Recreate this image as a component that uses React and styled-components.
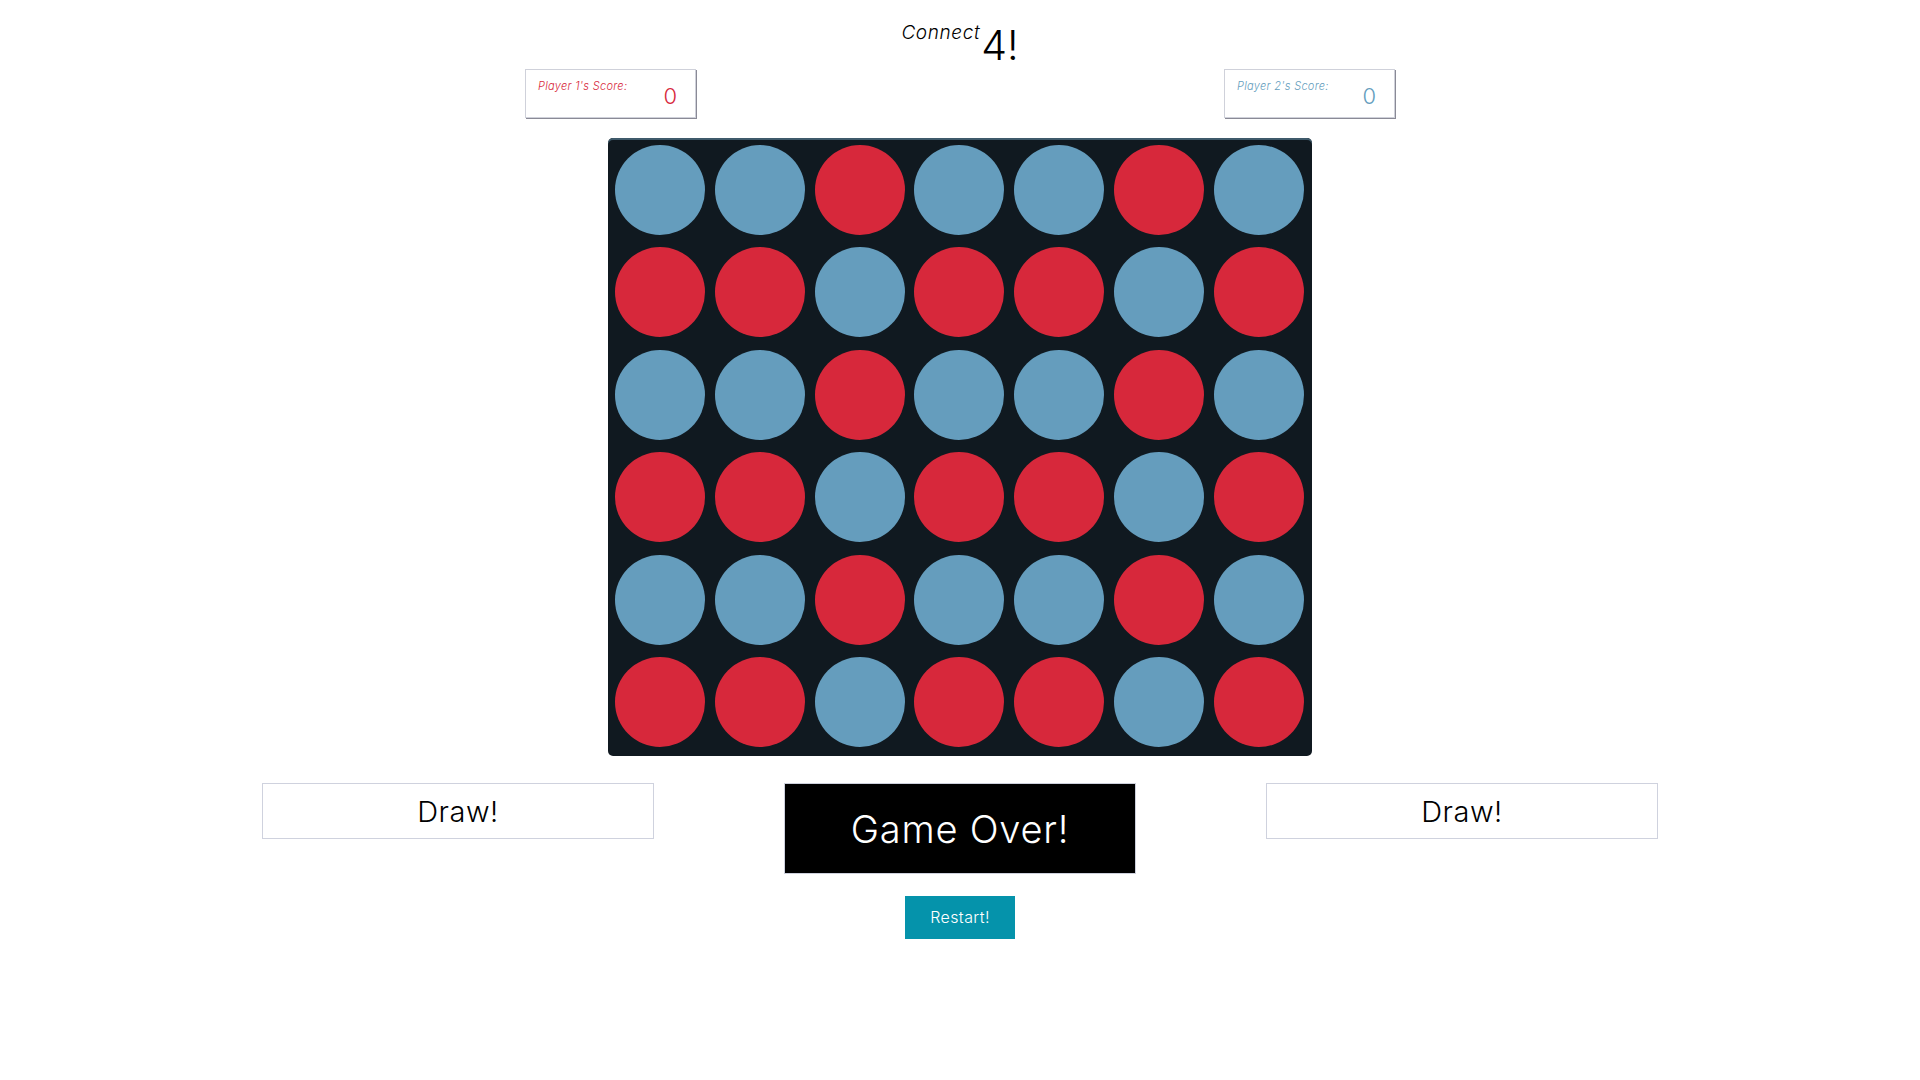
import React from "react";
import styled, { createGlobalStyle } from "styled-components";

const GlobalStyle = createGlobalStyle`
  body {
    margin: 0;
    background: #ffffff;
    font-family: "Inter", "Open Sans", sans-serif;
    color: #000;
  }
`;

const Page = styled.div`
  display: flex;
  flex-direction: column;
  align-items: center;
  min-height: 1080px;
`;

const Title = styled.h1`
  display: flex;
  align-items: flex-start;
  height: 69px;
  margin: 0;
  font-weight: 300;
`;

const Connect = styled.span`
  font-size: 19px;
  font-style: italic;
  font-weight: 300;
  letter-spacing: 0.6px;
  line-height: 1;
  margin-top: 23px;
  margin-right: 1px;
`;

const Four = styled.span`
  font-size: 41px;
  font-weight: 300;
  line-height: 1;
  margin-top: 25px;
`;

const ScoreRow = styled.div`
  display: flex;
  justify-content: space-between;
  width: 870px;
`;

const ScoreBox = styled.div`
  display: flex;
  justify-content: space-between;
  align-items: flex-start;
  width: 171px;
  height: 49px;
  box-sizing: border-box;
  padding: 9px 18px 0 12px;
  border: 1px solid #cfd1da;
  box-shadow: 1px 1px 0 #8a8a96;
  color: ${(p) => p.color};
`;

const ScoreLabel = styled.span`
  font-size: 11px;
  font-style: italic;
  font-weight: 300;
  letter-spacing: 0.3px;
  line-height: 1;
  margin-top: 2px;
`;

const ScoreValue = styled.span`
  font-size: 22px;
  font-weight: 300;
  line-height: 1;
  margin-top: 6px;
`;

const Board = styled.div`
  display: grid;
  grid-template-columns: repeat(7, 90px);
  grid-auto-rows: 90px;
  column-gap: 9.8px;
  row-gap: 12.4px;
  width: 704px;
  box-sizing: border-box;
  padding: 7px 5px 9px 7px;
  margin-top: 20px;
  background: #101920;
  border-radius: 5px;
  box-shadow: inset 0 2px 0 #3f5a6b;
`;

const Disc = styled.div`
  width: 90px;
  height: 90px;
  border-radius: 50%;
  background: ${(p) => (p.red ? "#d7283b" : "#659dbd")};
`;

const ButtonRow = styled.div`
  display: flex;
  align-items: flex-start;
  gap: 130px;
  margin-top: 27px;
`;

const DrawBox = styled.div`
  display: flex;
  align-items: center;
  justify-content: center;
  width: 392px;
  height: 56px;
  box-sizing: border-box;
  padding-top: 2px;
  border: 1px solid #cfd2de;
  font-size: 29px;
  font-weight: 300;
  letter-spacing: 0.5px;
`;

const GameOver = styled.div`
  display: flex;
  align-items: center;
  justify-content: center;
  width: 352px;
  height: 91px;
  box-sizing: border-box;
  padding-top: 2px;
  border: 1px solid #cdd0dc;
  background: #000;
  color: #fff;
  font-size: 38px;
  font-weight: 300;
  letter-spacing: 0.8px;
`;

const Restart = styled.button`
  width: 110px;
  height: 43px;
  margin-top: 22px;
  border: none;
  background: #0593ab;
  color: #fff;
  font-family: inherit;
  font-size: 16px;
  font-weight: 300;
  letter-spacing: 0.4px;
  cursor: pointer;
`;

const pattern = [
  "bbrbbrb",
  "rrbrrbr",
  "bbrbbrb",
  "rrbrrbr",
  "bbrbbrb",
  "rrbrrbr",
];

export default function App() {
  return (
    <Page>
      <GlobalStyle />
      <Title>
        <Connect>Connect</Connect>
        <Four>4!</Four>
      </Title>
      <ScoreRow>
        <ScoreBox color="#d7283b">
          <ScoreLabel>Player 1's Score:</ScoreLabel>
          <ScoreValue>0</ScoreValue>
        </ScoreBox>
        <ScoreBox color="#659dbd">
          <ScoreLabel>Player 2's Score:</ScoreLabel>
          <ScoreValue>0</ScoreValue>
        </ScoreBox>
      </ScoreRow>
      <Board>
        {pattern.map((row, r) =>
          row.split("").map((c, i) => <Disc key={r + "-" + i} red={c === "r"} />)
        )}
      </Board>
      <ButtonRow>
        <DrawBox>Draw!</DrawBox>
        <GameOver>Game Over!</GameOver>
        <DrawBox>Draw!</DrawBox>
      </ButtonRow>
      <Restart>Restart!</Restart>
    </Page>
  );
}
